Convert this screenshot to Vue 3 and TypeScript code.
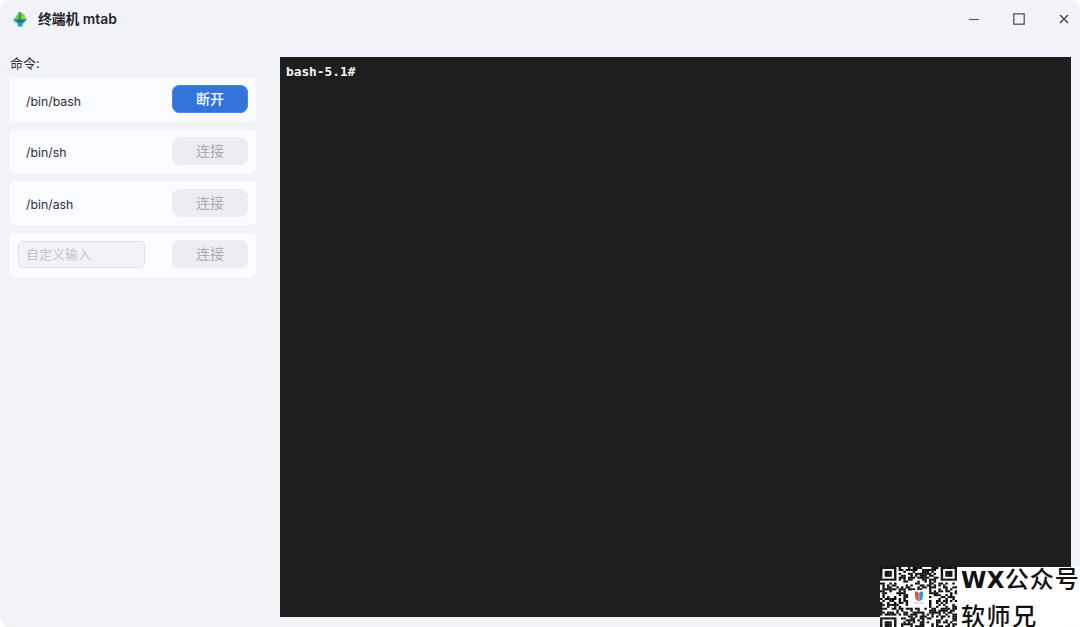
<script setup lang="ts">
interface Cmd { name: string; label: string; on: boolean }
const cmds: Cmd[] = [
  { name: '/bin/bash', label: '断开', on: true },
  { name: '/bin/sh', label: '连接', on: false },
  { name: '/bin/ash', label: '连接', on: false },
]
const N = 33
const finder = (x: number, y: number, ox: number, oy: number): boolean | null => {
  const dx = x - ox, dy = y - oy
  if (dx < -1 || dy < -1 || dx > 7 || dy > 7) return null
  if (dx === -1 || dy === -1 || dx === 7 || dy === 7) return false
  if (dx === 0 || dy === 0 || dx === 6 || dy === 6) return true
  if (dx === 1 || dy === 1 || dx === 5 || dy === 5) return false
  return true
}
const modules: { x: number; y: number }[] = []
let seed = 20240611
const rnd = () => { seed = (seed * 1664525 + 1013904223) >>> 0; return (seed >>> 16) / 65536 }
for (let y = 0; y < N; y++) {
  for (let x = 0; x < N; x++) {
    const r = rnd()
    const f = finder(x, y, 0, 0) ?? finder(x, y, N - 7, 0) ?? finder(x, y, 0, N - 7)
    const cx = x - 16, cy = y - 16
    const centre = Math.abs(cx) < 5 && Math.abs(cy) < 5
    const on = f !== null ? f : (!centre && r > 0.48)
    if (on) modules.push({ x, y })
  }
}
</script>

<template>
  <div class="window">
    <header class="titlebar">
      <div class="brand">
        <svg class="logo" viewBox="0 0 16 16" width="16" height="16">
          <circle cx="8" cy="9" r="7.6" fill="#d9f1f2" opacity="0.6" />
          <path d="M1.4 8 C1.6 9.8 3.4 11.4 5.6 12.4 L6 15.4 L10.4 15.4 L10.8 12.4 C12.8 11.4 14.6 9.8 14.8 7.6Z" fill="#17a5b8" />
          <path d="M4 8.4 L12.4 8.2 C11.8 10.4 10 11 8.2 11.6 C6.2 11.2 4.6 10.4 4 8.4Z" fill="#2d6486" />
          <path d="M3 8.6 C3 6 4.2 4.2 6 3.4 L7 8.6Z" fill="#7cc63c" />
          <path d="M6 8.6 L6.2 1.8 C7.4 0.4 9.4 1 9.8 2.4 L9.8 8.6Z" fill="#3ba64a" />
          <path d="M9.4 8.6 L9.8 2.6 C11.6 2.4 13.6 4 13.4 8.2Z" fill="#96cf38" />
        </svg>
        <span class="title">终端机 mtab</span>
      </div>
      <div class="controls">
        <svg width="12" height="12" viewBox="0 0 12 12"><path d="M1 6.5H11" stroke="#5c5f66" stroke-width="1.2" /></svg>
        <svg width="12" height="12" viewBox="0 0 12 12"><rect x="0.8" y="0.8" width="10.4" height="10.4" fill="none" stroke="#5c5f66" stroke-width="1.4" /></svg>
        <svg width="12" height="12" viewBox="0 0 12 12"><path d="M2 2L10 10M10 2L2 10" stroke="#3c3f45" stroke-width="1.3" /></svg>
      </div>
    </header>

    <main class="body">
      <aside class="side">
        <div class="heading">命令:</div>
        <div class="list">
          <div v-for="c in cmds" :key="c.name" class="card">
            <span class="name">{{ c.name }}</span>
            <button class="btn" :class="{ primary: c.on }">{{ c.label }}</button>
          </div>
          <div class="card custom">
            <input class="field" placeholder="自定义输入" disabled />
            <button class="btn">连接</button>
          </div>
        </div>
      </aside>
      <section class="terminal">bash-5.1#</section>
    </main>

    <div class="mark">
      <div class="qr-wrap">
        <svg class="qr" :viewBox="`0 0 ${N} ${N}`" width="77" height="64" preserveAspectRatio="none">
          <rect v-for="(m, i) in modules" :key="i" :x="m.x" :y="m.y" width="1.05" height="1.05" fill="#0c0c0c" />
        </svg>
        <svg class="qr-logo" viewBox="0 0 14 14" width="14" height="14">
          <path d="M3 2 C5 1 6.5 2 6.8 3 L6.8 11 C4.5 11 2.5 9 3 2Z" fill="#e2564f" />
          <path d="M11 2 C9 1 7.5 2 7.2 3 L7.2 11 C9.5 11 11.5 9 11 2Z" fill="#2aa3c9" />
          <path d="M2 13H12" stroke="#b5c4cc" stroke-width="1" />
        </svg>
      </div>
      <div class="mark-text">
        <div class="line-one"><span class="wx">WX</span>公众号</div>
        <div class="line-two">软师兄</div>
      </div>
    </div>
  </div>
</template>

<style>
html, body { margin: 0; background: #fff; }
</style>

<style scoped>
.window {
  position: relative;
  width: 1080px;
  height: 627px;
  box-sizing: border-box;
  background: #f2f3f9;
  border-radius: 10px;
  overflow: hidden;
  font-family: Inter, "Noto Sans CJK SC", sans-serif;
  color: #2c2e33;
  display: flex;
  flex-direction: column;
}
.titlebar {
  height: 38px;
  flex: none;
  display: flex;
  align-items: center;
  justify-content: space-between;
  padding: 0 10px 0 12px;
}
.brand { display: flex; align-items: center; gap: 10px; }
.logo { display: block; }
.title { font-size: 13.8px; line-height: 16px; font-weight: 600; color: #23252a; margin-top: -1px; white-space: nowrap; }
.controls { display: flex; align-items: center; gap: 33px; }
.controls svg { display: block; }
.body {
  flex: 1;
  display: flex;
  padding: 19px 9px 10px 10px;
  gap: 24px;
  min-height: 0;
}
.side { width: 246px; flex: none; }
.heading { font-size: 13px; line-height: 14px; margin-bottom: 8px; margin-top: -1px; color: #2c2e33; }
.list { display: flex; flex-direction: column; gap: 8px; }
.card {
  height: 43.67px;
  box-sizing: border-box;
  background: #fafbff;
  border-radius: 4px;
  display: flex;
  align-items: center;
  justify-content: space-between;
  padding: 0 8px 0 16px;
  font-size: 12.3px;
}
.card.custom { padding-left: 8px; }
.name { color: #2c2e33; margin-top: 3px; }
.btn {
  width: 76px;
  height: 28px;
  border: none;
  border-radius: 8px;
  background: #ecedf1;
  color: #a9abb3;
  font: inherit;
  font-size: 14px;
  padding: 0 0 2px;
  margin-top: -1px;
}
.btn.primary { background: #3373dc; color: #fff; font-weight: 500; box-shadow: inset 0 0 0 1px #4c87e6; }
.field {
  width: 127px;
  height: 27.5px;
  box-sizing: border-box;
  border: 1px solid #dfe1e8;
  border-radius: 5px;
  background: #f2f3f6;
  padding: 0 7px 1px;
  font: inherit;
  font-size: 13px;
  margin: -1px 0 0;
}
.field::placeholder { color: #c2c4cc; opacity: 1; }
.terminal {
  flex: none;
  width: 791px;
  box-sizing: border-box;
  background: #1e1e1e;
  color: #f4f4f4;
  font-family: "DejaVu Sans Mono", monospace;
  font-weight: 700;
  font-size: 12.8px;
  line-height: 16px;
  padding: 7px 6px;
}
.mark {
  position: absolute;
  right: 0;
  bottom: 0;
  width: 200px;
  height: 60px;
  background: #fff;
  display: flex;
}
.qr-wrap { position: relative; width: 78px; height: 60px; flex: none; overflow: hidden; }
.qr { display: block; }
.qr-logo { position: absolute; left: 32px; top: 23px; background: #fff; }
.mark-text {
  margin-left: 3px;
  margin-top: -1px;
  display: flex;
  flex-direction: column;
  gap: 11px;
  font-family: "Noto Sans CJK SC", sans-serif;
  font-size: 24px;
  line-height: 24px;
  font-weight: 500;
  color: #111;
  white-space: nowrap;
}
.line-one { letter-spacing: 1px; }
.line-two { letter-spacing: 1.6px; }
.wx { font-family: "DejaVu Sans", sans-serif; font-weight: 700; font-size: 23px; letter-spacing: 0.3px; }
</style>
